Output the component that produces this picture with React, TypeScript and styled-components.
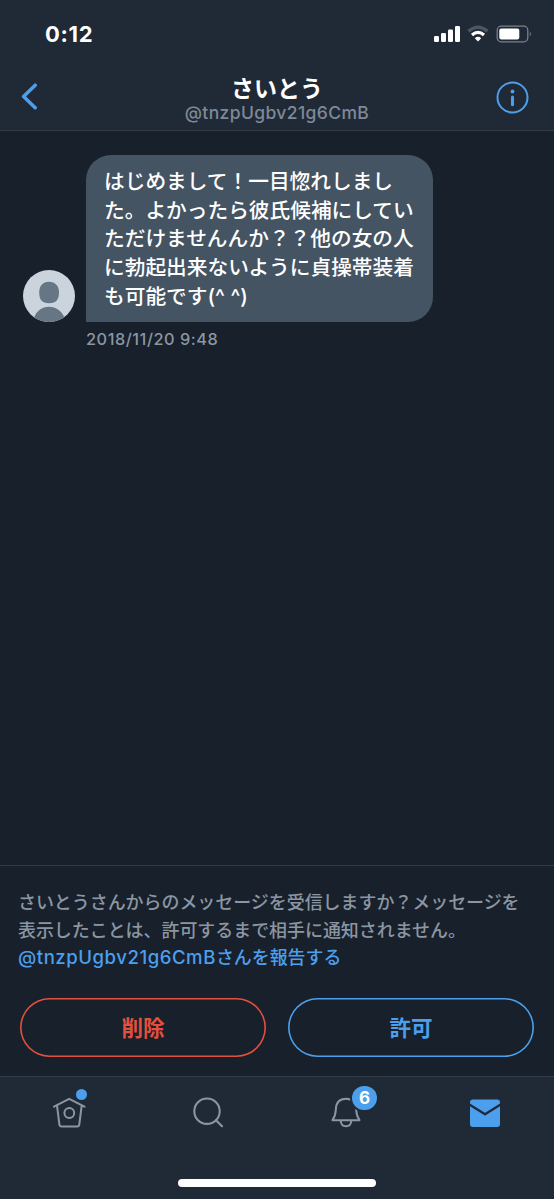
import React from 'react';
import styled, { createGlobalStyle } from 'styled-components';

const blue = '#4c9fec';
const red = '#e2503f';
const grey = '#8b96a3';
const bar = '#202936';
const line = '#303b47';

const GlobalStyle = createGlobalStyle`
  * { box-sizing: border-box; }
  body { margin: 0; background: #18202b; }
`;

const Screen = styled.div`
  width: 554px;
  height: 1199px;
  display: flex;
  flex-direction: column;
  background: #18202b;
  font-family: Inter, 'Noto Sans CJK JP', sans-serif;
  overflow: hidden;
`;

const Top = styled.header`
  height: 131px;
  background: ${bar};
  border-bottom: 1px solid ${line};
`;

const StatusBar = styled.div`
  height: 68px;
  display: flex;
  align-items: center;
  justify-content: space-between;
  padding: 0 21px 0 45px;
`;

const Clock = styled.div`
  color: #fff;
  font-size: 22px;
  font-weight: 700;
  line-height: 24px;
  letter-spacing: 0.7px;
`;

const TitleBar = styled.div`
  height: 62px;
  display: grid;
  grid-template-columns: 60px 1fr 60px;
`;

const IconButton = styled.button<{ $top: number; $left: number }>`
  padding: ${p => p.$top}px 0 0 ${p => p.$left}px;
  border: 0;
  background: none;
  display: flex;
  align-items: flex-start;
`;

const Titles = styled.div`
  display: flex;
  flex-direction: column;
  align-items: center;
  padding-top: 8px;
`;

const Name = styled.div`
  color: #fff;
  font-size: 23px;
  font-weight: 700;
  line-height: 26px;
  white-space: nowrap;
`;

const Handle = styled.div`
  color: #7e8a97;
  font-size: 17.5px;
  font-weight: 500;
  line-height: 22px;
  letter-spacing: 0.38px;
`;

const Conversation = styled.main`
  flex: 1;
  padding: 24px 23px;
`;

const Message = styled.div`
  display: grid;
  grid-template-columns: 52px 347px;
  column-gap: 11px;
  align-items: end;
`;

const Bubble = styled.div`
  height: 167px;
  padding: 13px 0 0 18px;
  border-radius: 25px 25px 25px 0;
  background: #445463;
`;

const TextLine = styled.div<{ $size: number; $height: number; $color?: string }>`
  color: ${p => p.$color ?? '#fff'};
  font-size: ${p => p.$size}px;
  font-weight: 500;
  line-height: ${p => p.$height}px;
  height: ${p => p.$height}px;
  white-space: nowrap;
`;

const Mention = styled.span`
  font-size: 18.6px;
  letter-spacing: 0.52px;
`;

const Stamp = styled.time`
  grid-column: 2;
  padding-top: 6px;
  color: ${grey};
  font-size: 16.3px;
  font-weight: 500;
  line-height: 22px;
  letter-spacing: 0.55px;
`;

const Request = styled.section`
  height: 211px;
  padding: 23px 20px 0 18px;
  border-top: 1px solid ${line};
`;

const Actions = styled.div`
  display: grid;
  grid-template-columns: 246px 246px;
  column-gap: 22px;
  padding: 26px 0 0 2px;
`;

const PillButton = styled.button<{ $color: string }>`
  height: 59px;
  padding: 1px 0 0;
  border: 0;
  box-shadow: inset 0 0 0 1.6px ${p => p.$color};
  border-radius: 30px;
  background: transparent;
  color: ${p => p.$color};
  font: 700 21.5px/30px Inter, 'Noto Sans CJK JP', sans-serif;
`;

const TabBar = styled.nav`
  height: 123px;
  display: flex;
  flex-direction: column;
  align-items: center;
  justify-content: space-between;
  padding-bottom: 12px;
  background: ${bar};
  border-top: 1px solid ${line};
`;

const Tabs = styled.div`
  width: 554px;
  display: grid;
  grid-template-columns: repeat(4, 1fr);
  padding-top: 17px;
`;

const Tab = styled.div`
  position: relative;
  height: 38px;
  display: flex;
  justify-content: center;
`;

const Dot = styled.span`
  position: absolute;
  left: 76px;
  top: -5px;
  width: 11px;
  height: 11px;
  border-radius: 50%;
  background: ${blue};
`;

const Badge = styled.span`
  position: absolute;
  left: 75px;
  top: -8px;
  width: 25px;
  height: 24px;
  border-radius: 12px;
  background: ${blue};
  box-shadow: 0 0 0 2px ${bar};
  color: #fff;
  font-size: 17px;
  font-weight: 700;
  line-height: 24px;
  text-align: center;
`;

const HomeIndicator = styled.div`
  width: 198px;
  height: 8px;
  border-radius: 4px;
  background: #fff;
`;

const messageLines = [
  'はじめまして！一目惚れしまし',
  'た。よかったら彼氏候補にしてい',
  'ただけませんんか？？他の女の人',
  'に勃起出来ないように貞操帯装着',
  'も可能です(^ ^)',
];

const StatusIcons = () => (
  <svg width="100" height="20" viewBox="0 0 100 20" fill="none">
    <g fill="#fff">
      <rect x="1" y="12" width="5" height="6" rx="1.3" />
      <rect x="8" y="9" width="5" height="9" rx="1.3" />
      <rect x="15" y="5.5" width="5" height="12.5" rx="1.3" />
      <rect x="22" y="2" width="5" height="16" rx="1.3" />
    </g>
    <path d="M35.5 7.2Q45 -1 54.5 7.2" stroke="#4c5662" strokeWidth="3.3" />
    <path d="M39 11Q45 5.7 51 11" stroke="#fff" strokeWidth="3.2" />
    <path d="M41.8 14.2Q45 11.5 48.2 14.2L45 17.6Z" fill="#fff" />
    <rect x="64.2" y="2.2" width="30.6" height="15.6" rx="4" stroke="#79818b" strokeWidth="1.3" />
    <rect x="66.3" y="4.5" width="20" height="11" rx="2" fill="#fff" />
    <path d="M96.8 7.5q2.2 2.5 0 5z" fill="#79818b" />
  </svg>
);

export default function App() {
  return (
    <Screen lang="ja">
      <GlobalStyle />
      <Top>
        <StatusBar>
          <Clock>0:12</Clock>
          <StatusIcons />
        </StatusBar>
        <TitleBar>
          <IconButton $top={15} $left={20} aria-label="戻る">
            <svg width="20" height="28" viewBox="0 0 20 28" fill="none" stroke={blue} strokeWidth="3.5" strokeLinecap="round" strokeLinejoin="round">
              <path d="M15.2 2.2 3.6 13.5 15.2 24.7" />
            </svg>
          </IconButton>
          <Titles>
            <Name>さいとう</Name>
            <Handle>@tnzpUgbv21g6CmB</Handle>
          </Titles>
          <IconButton $top={13} $left={2} aria-label="情報">
            <svg width="34" height="34" viewBox="0 0 34 34" fill="none" stroke={blue}>
              <circle cx="16.5" cy="16.5" r="15" strokeWidth="2" />
              <circle cx="16.5" cy="10.5" r="1.9" fill={blue} stroke="none" />
              <path d="M16.5 15.9v7.8" strokeWidth="3" strokeLinecap="round" />
            </svg>
          </IconButton>
        </TitleBar>
      </Top>
      <Conversation>
        <Message>
          <svg width="52" height="52" viewBox="0 0 52 52">
            <defs><clipPath id="avatar"><circle cx="26" cy="26" r="26" /></clipPath></defs>
            <g clipPath="url(#avatar)">
              <path d="M0 0h52v52H0z" fill="#cbd4dc" />
              <path d="M26 11.7c6.3 0 10 4.3 10 10.3 0 8-2.8 11.2-10 11.2S16.2 30 16.2 22c0-6 3.500-10.300 9.800-10.300z" fill="#667684" />
              <path d="M10 52c1.500-10 8-15.300 16-15.300S40.500 42 43 52z" fill="#667684" />
            </g>
          </svg>
          <Bubble>
            {messageLines.map(text => (
              <TextLine key={text} $size={20.7} $height={28.7}>{text}</TextLine>
            ))}
          </Bubble>
          <Stamp>2018/11/20 9:48</Stamp>
        </Message>
      </Conversation>
      <Request>
        <TextLine $size={17.95} $height={27.7} $color={grey}>さいとうさんからのメッセージを受信しますか？メッセージを</TextLine>
        <TextLine $size={17.95} $height={27.7} $color={grey}>表示したことは、許可するまで相手に通知されません。</TextLine>
        <TextLine $size={17.95} $height={27.7} $color={blue}><Mention>@tnzpUgbv21g6CmB</Mention>さんを報告する</TextLine>
        <Actions>
          <PillButton $color={red}>削除</PillButton>
          <PillButton $color={blue}>許可</PillButton>
        </Actions>
      </Request>
      <TabBar>
        <Tabs>
          <Tab>
            <svg width="36" height="36" viewBox="0 0 36 36" fill="none" stroke={grey} strokeWidth="2" strokeLinecap="round" strokeLinejoin="round">
              <path d="M3 12.700 18.200 4.800 33.500 12.700M6 11.500l2.400 19q.2 2 2.200 2h15.500q2 0 2.200-2l2.400-19" />
              <circle cx="18.300" cy="19" r="4.900" />
            </svg>
            <Dot />
          </Tab>
          <Tab>
            <svg width="36" height="36" viewBox="0 0 36 36" fill="none" stroke={grey} strokeWidth="2.100" strokeLinecap="round">
              <circle cx="17" cy="17.200" r="12.700" />
              <path d="m26 26.200 6 6" />
            </svg>
          </Tab>
          <Tab>
            <svg width="36" height="36" viewBox="0 0 36 36" fill="none" stroke={grey} strokeWidth="2" strokeLinejoin="round">
              <path d="M4.500 26.200Q7.500 22 7.800 16C8 8.500 11.500 4.800 18 4.800S28 8.500 28.200 16Q28.500 22 31.500 26.200Z" />
              <path d="M12.600 26.500q.5 5.800 5.400 5.800t5.400-5.800" />
            </svg>
            <Badge>6</Badge>
          </Tab>
          <Tab>
            <svg width="36" height="36" viewBox="0 0 36 36">
              <rect x="3" y="5.500" width="30" height="27.500" rx="3" fill={blue} />
              <path d="m2 10.300 16 10 16-10" fill="none" stroke={bar} strokeWidth="2.200" strokeLinejoin="round" />
            </svg>
          </Tab>
        </Tabs>
        <HomeIndicator />
      </TabBar>
    </Screen>
  );
}
